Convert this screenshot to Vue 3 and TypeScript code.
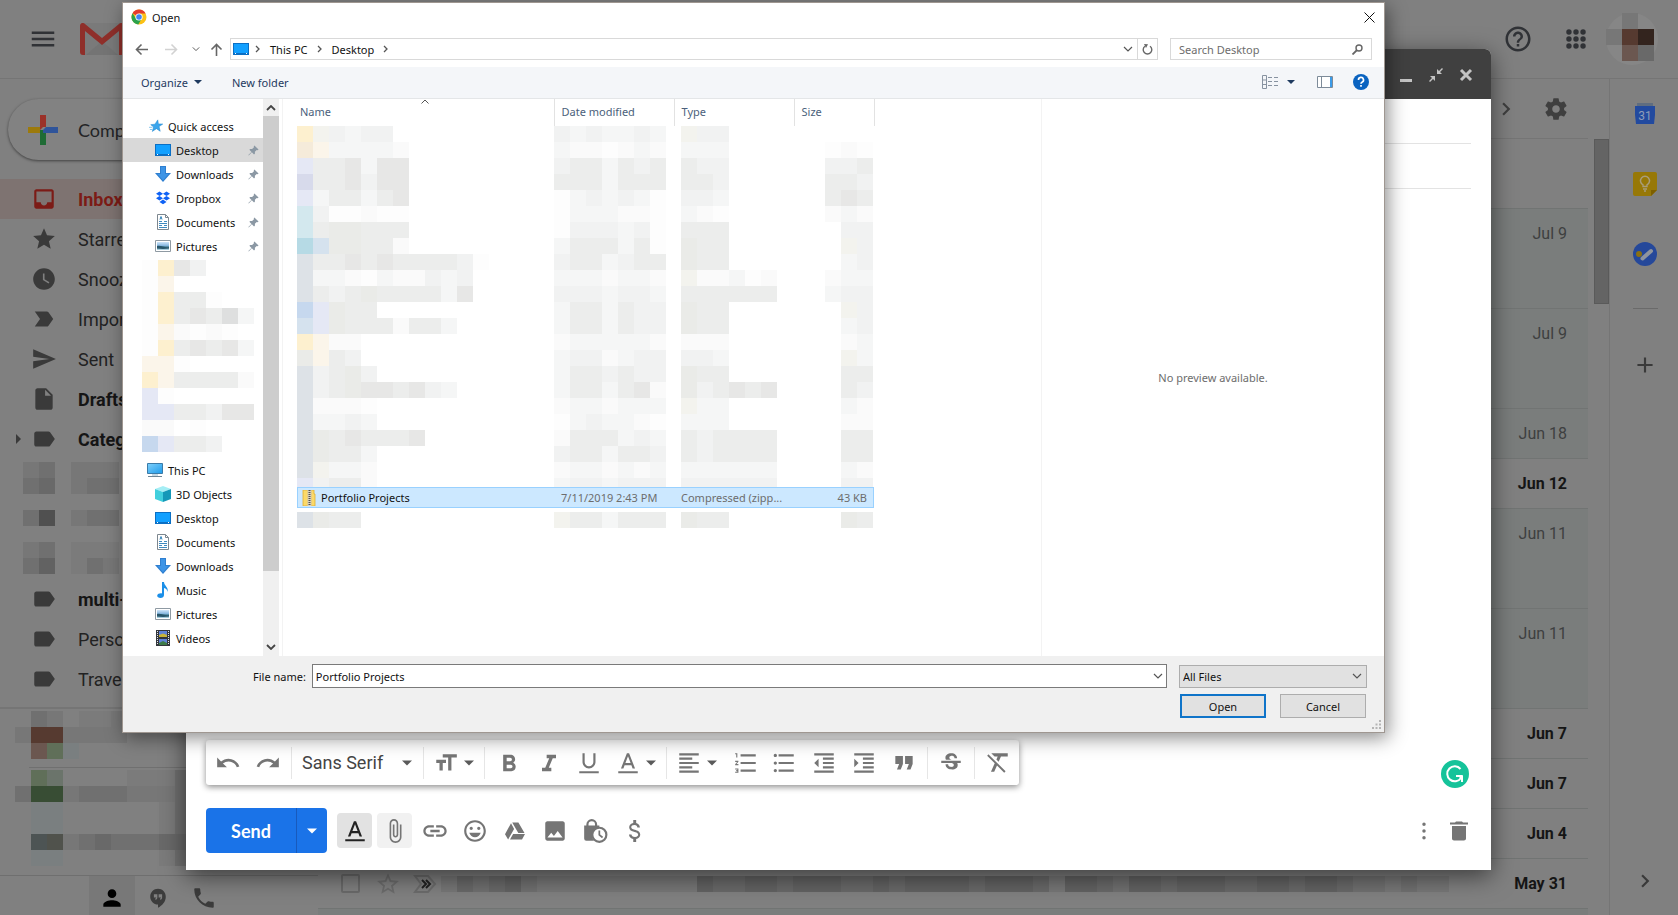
<script setup lang="ts">
import { defineComponent, h, ref, type PropType } from 'vue'

const paths: Record<string, string> = {
  menu: 'M3 18h18v-2H3v2zm0-5h18v-2H3v2zm0-7v2h18V6H3z',
  inbox: 'M19 3H5c-1.1 0-2 .9-2 2v14c0 1.1.9 2 2 2h14c1.1 0 2-.9 2-2V5c0-1.1-.9-2-2-2zm0 12h-4c0 1.66-1.34 3-3 3s-3-1.34-3-3H5V5h14v10z',
  star: 'M12 17.27L18.18 21l-1.64-7.03L22 9.24l-7.19-.61L12 2 9.19 8.63 2 9.24l5.46 4.73L5.82 21z',
  starOutline: 'M22 9.24l-7.19-.62L12 2 9.19 8.63 2 9.24l5.46 4.73L5.82 21 12 17.27 18.18 21l-1.63-7.03L22 9.24zM12 15.4l-3.76 2.27 1-4.28-3.32-2.88 4.38-.38L12 6.1l1.71 4.04 4.38.38-3.32 2.88 1 4.28L12 15.4z',
  clock: 'M12 2C6.5 2 2 6.5 2 12s4.5 10 10 10 10-4.5 10-10S17.5 2 12 2zm4.2 14.2L11 13V7h1.5v5.2l4.5 2.7-.8 1.3z',
  important: 'M3.5 18.99l11 .01c.67 0 1.27-.33 1.63-.84L20.5 12l-4.37-6.16c-.36-.51-.96-.84-1.63-.84l-11 .01L8.34 12 3.5 18.99z',
  send: 'M2.01 21L23 12 2.01 3 2 10l15 2-15 2z',
  draft: 'M6 2c-1.1 0-1.99.9-1.99 2L4 20c0 1.1.89 2 1.99 2H18c1.1 0 2-.9 2-2V8l-6-6H6zm7 7V3.5L18.5 9H13z',
  label: 'M17.63 5.84C17.27 5.33 16.67 5 16 5L5 5.01C3.9 5.01 3 5.9 3 7v10c0 1.1.9 1.99 2 1.99L16 19c.67 0 1.27-.33 1.63-.84L22 12l-4.37-6.16z',
  undo: 'M12.5 8c-2.65 0-5.05.99-6.9 2.6L2 7v9h9l-3.62-3.62c1.39-1.16 3.16-1.88 5.12-1.88 3.54 0 6.55 2.31 7.6 5.5l2.37-.78C21.08 11.03 17.15 8 12.5 8z',
  redo: 'M18.4 10.6C16.55 8.99 14.15 8 11.5 8c-4.65 0-8.58 3.03-9.96 7.22L3.9 16c1.05-3.19 4.05-5.5 7.6-5.5 1.95 0 3.73.72 5.12 1.88L13 16h9V7l-3.6 3.6z',
  size: 'M9 4v3h5v12h3V7h5V4H9zm-6 8h3v7h3v-7h3V9H3v3z',
  bold: 'M15.6 11.79c.97-.67 1.65-1.77 1.65-2.79 0-2.26-1.75-4-4-4H7v14h7.04c2.09 0 3.71-1.7 3.71-3.79 0-1.52-.86-2.82-2.15-3.42zM10 7.5h3c.83 0 1.5.67 1.5 1.5s-.67 1.5-1.5 1.5h-3v-3zm3.5 9H10v-3h3.5c.83 0 1.5.67 1.5 1.5s-.67 1.5-1.5 1.5z',
  italic: 'M10 5v3h2.21l-3.42 8H6v3h8v-3h-2.21l3.42-8H18V5z',
  underline: 'M12 17c3.31 0 6-2.69 6-6V3h-2v8c0 2.2-1.8 4-4 4s-4-1.8-4-4V3H6v8c0 3.31 2.69 6 6 6zM3 19.500v2h18v-2H3z',
  color: 'M11 3L5.500 17h2.250l1.120-3h6.250l1.120 3h2.250L13 3h-2zm-1.380 9L12 5.670 14.380 12H9.620zM3 19.500v2h18v-2z',
  align: 'M15 15H3v2h12v-2zm0-8H3v2h12V7zM3 13h18v-2H3v2zm0 8h18v-2H3v2zM3 3v2h18V3H3z',
  numbered: 'M2 18h2v.500H3v1h1v.500H2v1h3v-4H2v1zm1-11h1V3H2v1h1v3zm-1 4h1.800L2 13.100v.900h3v-1H3.200L5 10.900V10H2v1zm5-7v2h14V4H7zm0 16h14v-2H7v2zm0-7h14v-2H7v2z',
  bullets: 'M4 10.500c-.83 0-1.500.67-1.500 1.500s.67 1.500 1.500 1.500 1.500-.67 1.500-1.500-.67-1.500-1.500-1.500zm0-7c-.83 0-1.500.67-1.500 1.500S3.170 6.500 4 6.500 5.500 5.830 5.500 5 4.830 3.500 4 3.500zm0 14c-.83 0-1.500.68-1.500 1.500s.68 1.500 1.500 1.500 1.500-.68 1.500-1.500-.67-1.500-1.500-1.500zM7 20h14v-2H7v2zm0-7h14v-2H7v2zm0-9v2h14V4H7z',
  outdent: 'M11 17h10v-2H11v2zm-8-5l4 4V8l-4 4zm0 9h18v-2H3v2zM3 3v2h18V3H3zm8 6h10V7H11v2zm0 4h10v-2H11v2z',
  indent: 'M3 21h18v-2H3v2zM3 8v8l4-4-4-4zm8 9h10v-2H11v2zM3 3v2h18V3H3zm8 6h10V7H11v2zm0 4h10v-2H11v2z',
  quote: 'M4 5.500h7v7.500l-2 5H5.500l2-5H4zM13 5.500h7v7.500l-2 5h-3.500l2-5H13z',
  strike: 'M7.240 8.750c-.26-.48-.39-1.030-.39-1.670 0-.61.13-1.160.4-1.670.26-.5.63-.93 1.110-1.290.48-.35 1.050-.63 1.700-.83.66-.19 1.390-.29 2.180-.29.81 0 1.540.11 2.210.34.66.22 1.230.54 1.690.94.47.4.83.88 1.080 1.430s.38 1.150.38 1.810h-2.400c0-.31-.05-.59-.15-.85-.09-.27-.24-.49-.44-.68-.2-.19-.45-.33-.75-.44-.3-.1-.66-.16-1.060-.16-.39 0-.74.04-1.030.13s-.53.21-.72.36c-.19.16-.34.34-.44.55-.1.21-.15.43-.15.66 0 .48.25.88.74 1.210.38.25.77.48 1.410.7H7.390c-.05-.08-.11-.17-.15-.25zM21 12v-2H3v2h9.620c.18.07.4.14.55.2.37.17.66.34.87.51s.35.36.43.57c.07.2.11.43.11.69 0 .23-.05.45-.14.66-.09.2-.23.38-.42.53-.19.15-.42.26-.71.35-.29.08-.63.13-1.010.13-.43 0-.83-.04-1.180-.13s-.66-.23-.91-.42c-.25-.19-.45-.44-.59-.75s-.25-.76-.25-1.210H7c0 .55.08 1.130.24 1.580s.37.85.65 1.210c.28.35.6.66.98.92.37.26.78.48 1.220.65.44.17.9.3 1.380.39.48.08.96.13 1.440.13.8 0 1.530-.09 2.180-.28s1.210-.45 1.670-.79c.46-.34.82-.77 1.070-1.270s.38-1.070.38-1.710c0-.6-.1-1.140-.31-1.610-.05-.11-.11-.23-.17-.33H21z',
  clear: 'M3.270 4L2 5.270l6.970 6.970L5.500 20h3l2.570-5.660L17.730 21 19 19.730 3.550 4.270zM6 3v.18L8.820 6h2.900l-1.200 2.700 2.100 2.100L14.710 6H21V3H6z',
  attach: 'M16.500 6v11.500c0 2.210-1.790 4-4 4s-4-1.790-4-4V5c0-1.380 1.120-2.500 2.500-2.500s2.500 1.120 2.500 2.500v10.500c0 .55-.45 1-1 1s-1-.45-1-1V6H10v9.500c0 1.380 1.120 2.500 2.500 2.500s2.500-1.120 2.500-2.500V5c0-2.210-1.790-4-4-4S7 2.790 7 5v12.500c0 3.040 2.460 5.500 5.500 5.500s5.500-2.460 5.500-5.500V6h-1.500z',
  link: 'M3.900 12c0-1.710 1.390-3.100 3.100-3.100h4V7H7c-2.760 0-5 2.240-5 5s2.240 5 5 5h4v-1.900H7c-1.710 0-3.100-1.390-3.100-3.100zM8 13h8v-2H8v2zm9-6h-4v1.900h4c1.710 0 3.100 1.390 3.100 3.100s-1.390 3.100-3.100 3.100h-4V17h4c2.760 0 5-2.240 5-5s-2.240-5-5-5z',
  emoji: 'M12 2C6.480 2 2 6.480 2 12s4.470 10 10 10c5.520 0 10-4.480 10-10S17.520 2 12 2zM12 20c-4.420 0-8-3.580-8-8s3.580-8 8-8 8 3.580 8 8-3.580 8-8 8zm3.500-9c.83 0 1.500-.67 1.500-1.500S16.330 8 15.500 8 14 8.670 14 9.500s.67 1.500 1.500 1.500zm-7 0c.83 0 1.500-.67 1.500-1.500S9.330 8 8.500 8 7 8.670 7 9.500 7.670 11 8.500 11zm-1.800 2.500h10.600c-.8 2.540-2.780 4.200-5.300 4.200s-4.500-1.660-5.300-4.200z',
  drive: 'M8 4.200L2 15.200l3.100 5.300 6-10.500zM10.100 15L7 20.500h12l3-5.500zM21.500 14L15.400 3.500H9.200L15.300 14z',
  image: 'M21 19V5c0-1.100-.9-2-2-2H5c-1.100 0-2 .9-2 2v14c0 1.100.9 2 2 2h14c1.100 0 2-.9 2-2zM8.500 13.500l2.500 3.010L14.500 12l4.500 6H5l3.500-4.500z',
  dollar: 'M11.800 10.900c-2.270-.59-3-1.200-3-2.150 0-1.090 1.010-1.850 2.700-1.850 1.780 0 2.440.85 2.500 2.100h2.210c-.07-1.720-1.120-3.300-3.210-3.810V2.500h-2.500v2.660c-1.940.42-3.500 1.680-3.500 3.610 0 2.310 1.910 3.460 4.700 4.130 2.500.6 3 1.480 3 2.410 0 .69-.49 1.790-2.700 1.790-2.060 0-2.870-.92-2.980-2.100h-2.200c.12 2.190 1.760 3.420 3.680 3.830v2.670h2.500v-2.650c1.950-.37 3.500-1.500 3.500-3.550 0-2.840-2.430-3.810-4.700-4.400z',
  more: 'M12 6.500a1.900 1.900 0 1 0 0-3.800 1.900 1.900 0 0 0 0 3.800zm0 7.400a1.900 1.900 0 1 0 0-3.800 1.900 1.900 0 0 0 0 3.800zm0 7.400a1.900 1.900 0 1 0 0-3.800 1.900 1.900 0 0 0 0 3.800z',
  trash: 'M5 19.500c0 1.100.9 2 2 2h10c1.100 0 2-.9 2-2V7H5v12.500zM21 3.500h-5l-1-1H9l-1 1H3v2h18z',
  help: 'M11 18h2v-2h-2v2zm1-16C6.480 2 2 6.480 2 12s4.480 10 10 10 10-4.480 10-10S17.520 2 12 2zm0 18c-4.410 0-8-3.590-8-8s3.590-8 8-8 8 3.590 8 8-3.590 8-8 8zm0-14c-2.210 0-4 1.790-4 4h2c0-1.100.9-2 2-2s2 .9 2 2c0 2-3 1.750-3 5h2c0-2.250 3-2.500 3-5 0-2.210-1.790-4-4-4z',
  gear: 'M19.430 12.980c.04-.32.07-.64.07-.98s-.03-.66-.07-.98l2.110-1.650c.19-.15.24-.42.12-.64l-2-3.460c-.12-.22-.39-.3-.61-.22l-2.490 1c-.52-.4-1.080-.73-1.690-.98l-.38-2.650C14.460 2.180 14.250 2 14 2h-4c-.25 0-.46.18-.49.42l-.38 2.650c-.61.25-1.170.59-1.690.98l-2.490-1c-.23-.09-.49 0-.61.22l-2 3.460c-.13.22-.07.49.12.64l2.110 1.650c-.04.32-.07.65-.07.98s.03.66.07.98l-2.110 1.650c-.19.15-.24.42-.12.64l2 3.460c.12.22.39.3.61.22l2.490-1c.52.4 1.080.73 1.690.98l.38 2.650c.03.24.24.42.49.42h4c.25 0 .46-.18.49-.42l.38-2.650c.61-.25 1.170-.59 1.690-.98l2.490 1c.23.09.49 0 .61-.22l2-3.460c.12-.22.07-.49-.12-.64l-2.110-1.650zM12 15.500c-1.930 0-3.500-1.570-3.500-3.500s1.570-3.500 3.500-3.500 3.500 1.570 3.500 3.500-1.570 3.500-3.500 3.500z',
  person: 'M12 12c2.210 0 4-1.790 4-4s-1.790-4-4-4-4 1.790-4 4 1.790 4 4 4zm0 2c-2.670 0-8 1.340-8 4v2h16v-2c0-2.660-5.330-4-8-4z',
  hangouts: 'M12 2C7.300 2 3.500 5.800 3.500 10.500S7.300 19 12 19v3.500c4.500-2.300 8.500-6.500 8.500-12C20.500 5.800 16.700 2 12 2zm-.7 9.300c0 1.900-.8 2.700-2.300 2.700v-1.500c.7 0 1-.3 1-1H7.500V8h3.800zm5.200 0c0 1.900-.8 2.700-2.300 2.700v-1.500c.7 0 1-.3 1-1h-2.500V8h3.800z',
  phone: 'M6.620 10.790c1.440 2.830 3.760 5.140 6.590 6.590l2.200-2.200c.27-.27.67-.36 1.020-.24 1.120.37 2.330.57 3.570.57.55 0 1 .45 1 1V20c0 .55-.45 1-1 1-9.390 0-17-7.610-17-17 0-.55.45-1 1-1h3.500c.55 0 1 .45 1 1 0 1.250.2 2.450.57 3.570.11.35.03.74-.25 1.020l-2.200 2.200z',
  next: 'M10 6L8.590 7.410 13.170 12l-4.580 4.590L10 18l6-6z',
  add: 'M19 13h-6v6h-2v-6H5v-2h6V5h2v6h6v2z',
  apps: 'M3 5.500a2.500 2.500 0 1 0 5 0 2.500 2.500 0 1 0-5 0zM9.500 5.500a2.500 2.500 0 1 0 5 0 2.500 2.500 0 1 0-5 0zM16 5.500a2.500 2.500 0 1 0 5 0 2.500 2.500 0 1 0-5 0zM3 12a2.500 2.500 0 1 0 5 0 2.500 2.500 0 1 0-5 0zM9.500 12a2.500 2.500 0 1 0 5 0 2.500 2.500 0 1 0-5 0zM16 12a2.500 2.500 0 1 0 5 0 2.500 2.500 0 1 0-5 0zM3 18.500a2.500 2.500 0 1 0 5 0 2.500 2.500 0 1 0-5 0zM9.500 18.500a2.500 2.500 0 1 0 5 0 2.500 2.500 0 1 0-5 0zM16 18.500a2.500 2.500 0 1 0 5 0 2.500 2.500 0 1 0-5 0z',
  caret: 'M0 6h24L12 18z',
}

const Icon = defineComponent({
  props: { name: { type: String, required: true } },
  setup: (props) => () =>
    h('svg', { viewBox: '0 0 24 24', 'aria-hidden': 'true' }, [h('path', { d: paths[props.name], fill: 'currentColor' })]),
})

// One letter per 16px cell of a redacted area
const palette: Record<string, string> = {
  a: '#fdfdfd', b: '#fafafa', c: '#f5f6f6', d: '#f1f2f2', e: '#ecedec', f: '#e7e7e6', g: '#dedfdf',
  y: '#fdf0cf', o: '#f5ebda', n: '#fbf5ea', m: '#f3f3ee', k: '#eaebe8',
  v: '#e5e8f5', V: '#d7daeb', t: '#d3e8ee', T: '#b6dae5', s: '#dde2e7', S: '#c6d8ee', u: '#d5e2ee',
  '0': '#7b7b7b', '1': '#777777', '2': '#707070', '3': '#696969', '4': '#626262', '5': '#505050',
  r: '#563a30', R: '#6b5750', q: '#33241e', G: '#384d34', j: '#606f59', l: '#6b746b', x: '#4d5454', X: '#50524c', z: '#7a7f80',
}

const Mosaic = defineComponent({
  props: { rows: { type: Array as PropType<string[]>, required: true } },
  setup: (props) => () => {
    const cols = Math.max(...props.rows.map((r) => r.length))
    const cells = props.rows.flatMap((row, y) =>
      [...row].flatMap((c, x) =>
        c === '.' ? [] : [h('rect', { x: x * 16, y: y * 16, width: 16, height: 16, fill: palette[c] })],
      ),
    )
    return h(
      'svg',
      { width: cols * 16, height: props.rows.length * 16, 'shape-rendering': 'crispEdges', 'aria-hidden': 'true' },
      cells,
    )
  },
})

const split = (s: string) => s.split(' ')
const nameCells = split('ymdcdd onccccb veefcff Veefdff vceecef tdaabaa tekkeee Tukkeeb seefefeeeeda sccbacbbdcd sedekeeeecf Svkee uvkeeebeec ynbb kned sdekd sdekffefdc sbbba sccdc skefeeef skeec smccb vdeeb')
const dateCells = split('dcdccdc cbbabcb deecede eeeceee acdcdca acccbba adddcda ceeecea deecdee cccbccb dddcddc ceecedd ceecedd bcccccb cddbcdd ceededd ceecefb bccbccc acdccba beeecdc deeceed bccbcbc cddcddd')
const typeCells = split('mdd... ccc... edd... eed... ddc... cba... eee... kee... kee... mbbcab eeeeee kee... kee... bbb... ddc... kee... kdefef mcc... ccc... edeeee edeeee cccccc dddddd')
const sizeCells = split('... aba dde eed efe bcb .dd .md .cd bcc cdd .md .cd .bc .mc .ee .ed .cb .bb .ee .ee .cb .dd')
const treeCells = split('ayfd... an..... ayeea.. ayefegc anbaba. ayefefc nna.... yneeeeb va..... vveedff bb.a... Sveed..')
const labelCells = split('12.111 23.122 ...... 25.122 ...... 12.000 24.021')
const chatTop = split('.21.001 1rr1111 .Rjz...')
const chatBottom = split('.jl....0002 2GG12221112 .zz......02 .zz......02 .xX12322233 .zz......02')
const mailCells = ['1323421111111111' + '4334434443343444434443' + '1' + '44324434443' + '3443443221' + '211']

interface Folder { icon: string; label: string; bold?: boolean; active?: boolean; expandable?: boolean }
const folders: Folder[] = [
  { icon: 'inbox', label: 'Inbox', bold: true, active: true },
  { icon: 'star', label: 'Starred' },
  { icon: 'clock', label: 'Snoozed' },
  { icon: 'important', label: 'Important' },
  { icon: 'send', label: 'Sent' },
  { icon: 'draft', label: 'Drafts', bold: true },
  { icon: 'label', label: 'Categories', bold: true, expandable: true },
]
const labels: Folder[] = [
  { icon: 'label', label: 'multi-', bold: true },
  { icon: 'label', label: 'Personal' },
  { icon: 'label', label: 'Travel' },
]

interface Mail { date: string; tall?: boolean; unread?: boolean }
const mails: Mail[] = [
  { date: 'Jul 9', tall: true },
  { date: 'Jul 9', tall: true },
  { date: 'Jun 18' },
  { date: 'Jun 12', unread: true },
  { date: 'Jun 11', tall: true },
  { date: 'Jun 11', tall: true },
  { date: 'Jun 7', unread: true },
  { date: 'Jun 7', unread: true },
  { date: 'Jun 4', unread: true },
]

const quick = [
  { icon: 'desktop', label: 'Desktop', active: true },
  { icon: 'downloads', label: 'Downloads' },
  { icon: 'dropbox', label: 'Dropbox' },
  { icon: 'documents', label: 'Documents' },
  { icon: 'pictures', label: 'Pictures' },
]
const thisPc = [
  { icon: 'cube', label: '3D Objects' },
  { icon: 'desktop', label: 'Desktop' },
  { icon: 'documents', label: 'Documents' },
  { icon: 'downloads', label: 'Downloads' },
  { icon: 'music', label: 'Music' },
  { icon: 'pictures', label: 'Pictures' },
  { icon: 'videos', label: 'Videos' },
]

const fileName = ref('Portfolio Projects')
const search = ref('')
</script>

<template>
  <div class="page">
    <svg class="defs" width="0" height="0" aria-hidden="true">
      <defs>
        <linearGradient id="sky" x1="0" y1="0" x2="0" y2="1"><stop offset="0" stop-color="#cfe6fa" /><stop offset=".5" stop-color="#7fb2dc" /><stop offset=".6" stop-color="#3f7a8c" /><stop offset="1" stop-color="#b9dcec" /></linearGradient>
        <linearGradient id="screen" x1="0" y1="0" x2="1" y2="1"><stop offset="0" stop-color="#7fd0fb" /><stop offset="1" stop-color="#1e9bea" /></linearGradient>
      </defs>
      <symbol id="w-desktop" viewBox="0 0 16 16"><path d="M0 2h16v12H0z" fill="#0b6fc4" /><path d="M1 3h14v9H1z" fill="#12a0ff" /><path d="M2 12.500h1M13 12.500h1" stroke="#fff" /></symbol>
      <symbol id="w-downloads" viewBox="0 0 16 16"><path d="M5 0h6v7h5l-8 9-8-9h5z" fill="#2f7fd0" /><path d="M6 1h4v7h3.500L8 14.300 2.500 8H6z" fill="#3d94e6" /></symbol>
      <symbol id="w-dropbox" viewBox="0 0 16 16"><path d="M4.500 1.500L8 3.800 4.500 6 1 3.800zM11.500 1.500L15 3.800 11.500 6 8 3.800zM4.500 6L8 8.300l-3.500 2.200L1 8.300zM11.500 6L15 8.300l-3.500 2.200L8 8.300zM8 9.600l3.500 2.300L8 14.200l-3.500-2.300z" fill="#0f62f5" /></symbol>
      <symbol id="w-documents" viewBox="0 0 16 16"><path d="M2.500.5h8l3 3v12h-11z" fill="#fff" stroke="#7d878f" /><path d="M10.500.5v3h3" fill="none" stroke="#7d878f" /><path d="M4 7.500h3M4 9.500h8M4 11.500h3M9 11.500h3M4 13.500h8M9 7.500h3" stroke="#3f8bbf" /><path d="M5 5.500l1-3 1 3" fill="none" stroke="#2d7fb8" /></symbol>
      <symbol id="w-pictures" viewBox="0 0 16 16"><path d="M.5 2.500h15v11H.5z" fill="#fff" stroke="#8f9aa3" /><path d="M2 4h12v8H2z" fill="url(#sky)" /><path d="M2 8c4-1 8 2 12 1v1.500c-4 .5-8 .5-12 0z" fill="#28566b" /></symbol>
      <symbol id="w-cube" viewBox="0 0 16 16"><path d="M0 3l8-3 8 3-8 3z" fill="#a5eef5" /><path d="M0 3l8 3v10l-8-3z" fill="#41cfdd" /><path d="M16 3L8 6v10l8-3z" fill="#1598b8" /></symbol>
      <symbol id="w-music" viewBox="0 0 16 16"><path d="M7 0h2c0 4 5 5 3.500 10-.2-2.500-1.500-3.500-3.500-4v7c0 1.800-1.500 3-3.500 3S2 15 2.200 13.500C2.500 12 5 11 7 11.500z" fill="#1b8fe8" /></symbol>
      <symbol id="w-videos" viewBox="0 0 16 16"><path d="M1 0h14v16H1z" fill="#33363c" /><path d="M2.500 1v14M13.500 1v14" stroke="#e8e8e8" stroke-dasharray="1 1" /><path d="M4 1h8v6H4z" fill="#5f82d8" /><path d="M4 9h8v6H4z" fill="#5f82d8" /><path d="M4 5l4-1.500 4 1.500v2H4z" fill="#c8b43a" /><path d="M4 13l4-2 4 2v2H4z" fill="#3c7a48" /></symbol>
      <symbol id="w-pc" viewBox="0 0 16 16"><path d="M.5 1.500h15v10H.5z" fill="url(#screen)" stroke="#3b7ba8" /><path d="M5 13h6" stroke="#8fb3c8" /><path d="M1 14.500h14" stroke="#6f8594" /></symbol>
      <symbol id="w-star" viewBox="0 0 16 16"><path d="M10 1l.7 4.600 5 .2-4.200 2.900 1.300 5.300-4.300-3-4.700 3.200 1.500-5L2 6.500l4.800-.6z" fill="#3aa5ec" stroke="#1f86cf" stroke-width=".6" /><path d="M0 9.500h4M1 12h3" stroke="#79bfea" /></symbol>
      <symbol id="w-zip" viewBox="0 0 16 16"><path d="M2 0h5v16H2zM10 0h3v4h1v12h-4z" fill="#fbd968" stroke="#dfae33" stroke-width=".8" /><path d="M6.500 0h4v16h-4z" fill="#d9d3bd" /><path d="M8.500 0v16" stroke="#57514a" stroke-width="2" stroke-dasharray="1 1" /></symbol>
      <symbol id="w-pin" viewBox="0 0 12 12"><path d="M7 .5L11.500 5l-1 .6-1-.2-2 2 .1 2-1 .9-2.400-2.300L.8 11.400l-.4-.4L3.800 7.600 1.500 5.300l.9-1 2.100.1 2-2-.2-1z" fill="#8b98a4" /></symbol>
      <symbol id="w-chevron" viewBox="0 0 10 6"><path d="M1 1l4 4 4-4" fill="none" stroke="#555" stroke-width="1.200" /></symbol>
      <symbol id="w-right" viewBox="0 0 6 8"><path d="M1 1l3 3-3 3" fill="none" stroke="#555" stroke-width="1.300" /></symbol>
    </svg>

    <header class="top">
      <button class="plain menu" aria-label="Main menu"><Icon name="menu" class="i30" /></button>
      <svg class="logo" viewBox="0 0 44 32" role="img" aria-label="Gmail"><path d="M4 0h36v32H4z" fill="#7a7a7a" /><path d="M6 32l16-14 16 14z" fill="#747474" /><path d="M3 32a3 3 0 0 1-3-3V3C0 0 3-1 5 1l17 14L39 1c2-2 5-1 5 2v26a3 3 0 0 1-3 3h-2V8L22 22 5 8v24z" fill="#8f2f2a" /></svg>
      <span class="grow"></span>
      <button class="plain dark" aria-label="Support"><Icon name="help" class="i30" /></button>
      <button class="plain dark apps" aria-label="Google apps"><Icon name="apps" class="i26" /></button>
      <button class="plain avatar" aria-label="Account"><Mosaic :rows="['.1.', '1rq', '.R3']" /></button>
    </header>

    <div class="body">
      <nav class="left" aria-label="Mailboxes">
        <button class="compose-btn">
          <svg viewBox="0 0 30 30" aria-hidden="true"><path d="M12 0h6v12h-3l-3 3z" fill="#9b3129" /><path d="M0 12h12v6H0z" fill="#9c7a0c" /><path d="M12 15l3 0 3 3v12h-6z" fill="#1f6b35" /><path d="M18 12h12v6H15v-3z" fill="#2f549a" /></svg>
          <span>Compose</span>
        </button>
        <a v-for="f in folders" :key="f.label" href="#" class="folder" :class="{ bold: f.bold, active: f.active }">
          <span class="expander"><svg v-if="f.expandable" viewBox="0 0 5 10" aria-hidden="true"><path d="M0 0l5 5-5 5z" fill="#3a3a3a" /></svg></span>
          <Icon :name="f.icon" class="i26" />
          <span>{{ f.label }}</span>
        </a>
        <div class="label-block"><Mosaic :rows="labelCells" /></div>
        <a v-for="f in labels" :key="f.label" href="#" class="folder" :class="{ bold: f.bold }">
          <span class="expander"></span>
          <Icon :name="f.icon" class="i26" />
          <span>{{ f.label }}</span>
        </a>
        <section class="chat" aria-label="Chat">
          <Mosaic :rows="chatTop" />
          <hr />
          <Mosaic :rows="chatBottom" />
        </section>
        <div class="chat-tabs">
          <button class="plain on" aria-label="Contacts"><Icon name="person" class="i26" /></button>
          <button class="plain" aria-label="Hangouts"><Icon name="hangouts" class="i22" /></button>
          <button class="plain" aria-label="Phone"><Icon name="phone" class="i26" /></button>
        </div>
      </nav>

      <main class="list">
        <div class="list-tools">
          <button class="plain" aria-label="Older"><Icon name="next" class="i26" /></button>
          <button class="plain" aria-label="Settings"><Icon name="gear" class="i26" /></button>
        </div>
        <div class="spacer"></div>
        <article v-for="(m, i) in mails" :key="i" class="mail" :class="{ tall: m.tall, unread: m.unread }">
          <time>{{ m.date }}</time>
        </article>
        <article class="mail unread">
          <input type="checkbox" aria-label="Select conversation" />
          <Icon name="starOutline" class="i26 faint" />
          <svg class="marker" viewBox="0 0 24 20" aria-hidden="true"><path d="M2 2h13l7 8-7 8H2l6-8z" fill="none" stroke="#6c6c6c" stroke-width="2" /><path d="M9 6l4 4-4 4M13 6l4 4-4 4" fill="none" stroke="#222" stroke-width="2" /></svg>
          <Mosaic :rows="mailCells" />
          <time>May 31</time>
        </article>
        <article class="mail"></article>
      </main>
      <div class="scroll"><div class="scroll-thumb"></div></div>

      <aside class="side" aria-label="Add-ons">
        <svg viewBox="0 0 24 24" role="img" aria-label="Calendar"><path d="M4 1h16v5H4z" fill="#5f6d80" /><path d="M2 4h20v9l-1 9H3l-1-9z" fill="#224a9f" /><text x="12" y="18" text-anchor="middle" class="cal">31</text></svg>
        <svg viewBox="0 0 24 24" role="img" aria-label="Keep"><path d="M2 0h20a2 2 0 0 1 2 2v16l-6 6H2a2 2 0 0 1-2-2V2a2 2 0 0 1 2-2z" fill="#977807" /><path d="M24 18l-6 6v-6z" fill="#7d5f00" /><path d="M10 14.500v-1.700a4.500 4.500 0 1 1 4 0v1.700zM10 17h4M11 19h2" fill="none" stroke="#a89d7c" stroke-width="1.400" /></svg>
        <svg viewBox="0 0 24 24" role="img" aria-label="Tasks"><circle cx="12" cy="12" r="12" fill="#25489a" /><circle cx="6" cy="12" r="3" fill="#8a7013" /><path d="M9.500 16.500L18 9" stroke="#8f959e" stroke-width="4" stroke-linecap="round" /></svg>
        <hr />
        <button class="plain" aria-label="Get add-ons"><Icon name="add" class="i26" /></button>
        <span class="grow"></span>
        <button class="plain" aria-label="Hide side panel"><Icon name="next" class="i26" /></button>
      </aside>
    </div>

    <section class="compose" aria-label="New message">
      <header class="compose-head">
        <button class="plain" aria-label="Minimize"><svg viewBox="0 0 14 14"><path d="M1 11h12v3H1z" fill="#c4c4c4" /></svg></button>
        <button class="plain" aria-label="Exit full screen"><svg viewBox="0 0 14 14"><path d="M13 0l1 1-3 3 2 2H8V1l2 2zM1 14l-1-1 3-3-2-2h5v5l-2-2z" fill="#c4c4c4" /></svg></button>
        <button class="plain" aria-label="Close message"><svg viewBox="0 0 14 14"><path d="M2 2l10 10M12 2L2 12" stroke="#c4c4c4" stroke-width="3" /></svg></button>
      </header>
      <div class="field"></div>
      <div class="field"></div>
      <div class="grow"></div>

      <div class="format" role="toolbar" aria-label="Formatting options">
        <button class="tool" aria-label="Undo"><Icon name="undo" class="i26" /></button>
        <button class="tool" aria-label="Redo"><Icon name="redo" class="i26" /></button>
        <span class="sep wide"></span>
        <span class="font">
          <select aria-label="Font"><option>Sans Serif</option></select>
          <Icon name="caret" class="caret" />
        </span>
        <span class="sep"></span>
        <button class="tool drop" aria-label="Size"><Icon name="size" class="i26" /><Icon name="caret" class="caret" /></button>
        <span class="sep after"></span>
        <button class="tool" aria-label="Bold"><Icon name="bold" class="i28" /></button>
        <button class="tool" aria-label="Italic"><Icon name="italic" class="i28" /></button>
        <button class="tool" aria-label="Underline"><Icon name="underline" class="i26" /></button>
        <button class="tool drop narrow" aria-label="Text color"><Icon name="color" class="i26" /><Icon name="caret" class="caret" /></button>
        <span class="sep"></span>
        <button class="tool drop" aria-label="Align"><Icon name="align" class="i26" /><Icon name="caret" class="caret" /></button>
        <button class="tool first" aria-label="Numbered list"><Icon name="numbered" class="i26" /></button>
        <button class="tool" aria-label="Bulleted list"><Icon name="bullets" class="i26" /></button>
        <button class="tool" aria-label="Indent less"><Icon name="outdent" class="i26" /></button>
        <button class="tool" aria-label="Indent more"><Icon name="indent" class="i26" /></button>
        <button class="tool" aria-label="Quote"><Icon name="quote" class="i26" /></button>
        <span class="sep wide"></span>
        <button class="tool" aria-label="Strikethrough"><Icon name="strike" class="i26" /></button>
        <span class="sep wide"></span>
        <button class="tool" aria-label="Remove formatting"><Icon name="clear" class="i26" /></button>
      </div>

      <div class="actions">
        <div class="send">
          <button class="send-main">Send</button>
          <button class="send-more" aria-label="More send options"><Icon name="caret" class="caret" /></button>
        </div>
        <button class="act on" aria-label="Formatting"><Icon name="color" class="i26" /></button>
        <button class="act hover" aria-label="Attach files"><Icon name="attach" class="i26" /></button>
        <button class="act" aria-label="Insert link"><Icon name="link" class="i28" /></button>
        <button class="act" aria-label="Insert emoji"><Icon name="emoji" class="i26" /></button>
        <button class="act" aria-label="Insert from Drive"><Icon name="drive" class="i24" /></button>
        <button class="act" aria-label="Insert photo"><Icon name="image" class="i26" /></button>
        <button class="act" aria-label="Confidential mode"><svg class="i26" viewBox="0 0 24 24"><path d="M5 8V6a4 4 0 0 1 8 0v2" fill="none" stroke="#757575" stroke-width="2" /><path d="M2 7h14v2a7.500 7.500 0 0 0-5 12H4a2 2 0 0 1-2-2z" fill="#757575" /><circle cx="16" cy="15.500" r="6.500" fill="#fff" stroke="#757575" stroke-width="2" /><path d="M16 11.500v4l3 2.500" fill="none" stroke="#757575" stroke-width="1.600" /></svg></button>
        <button class="act" aria-label="Send money"><Icon name="dollar" class="i28" /></button>
        <span class="grow"></span>
        <button class="act slim" aria-label="More options"><Icon name="more" class="i22" /></button>
        <button class="act slim" aria-label="Discard draft"><Icon name="trash" class="i24" /></button>
      </div>

      <button class="plain grammar" aria-label="Grammar check"><svg viewBox="0 0 28 28"><circle cx="14" cy="14" r="14" fill="#15c39a" /><path d="M19.500 9A7.500 7.500 0 1 0 20 18" fill="none" stroke="#fff" stroke-width="2" /><path d="M15 16h6.500l-3 1.500M21 15.500V22" fill="none" stroke="#fff" stroke-width="2" /></svg></button>
    </section>

    <section class="dialog" role="dialog" aria-label="Open">
      <div class="title">
        <svg class="i16" viewBox="0 0 16 16" aria-hidden="true"><circle cx="8" cy="8" r="7.500" fill="#fbc116" /><path d="M8 8L1.500 4.200A7.500 7.500 0 0 1 14.600 4.500H8z" fill="#e33b2e" /><path d="M1.500 4.200A7.500 7.500 0 0 0 7.300 15.500l3.500-6L8 8 5 9.500z" fill="#2ba24c" /><circle cx="8" cy="8" r="3.600" fill="#fff" /><circle cx="8" cy="8" r="2.800" fill="#4184f3" /></svg>
        <span class="grow">Open</span>
        <button class="plain" aria-label="Close"><svg class="i11" viewBox="0 0 11 11"><path d="M.5.5l10 10M10.500.5l-10 10" stroke="#111" /></svg></button>
      </div>

      <div class="nav-row">
        <button class="plain" aria-label="Back"><svg class="i13" viewBox="0 0 13 13"><path d="M13 6.500H1.500M6.500 1.500l-5 5 5 5" fill="none" stroke="#666" stroke-width="1.600" /></svg></button>
        <button class="plain fwd" aria-label="Forward"><svg class="i13" viewBox="0 0 13 13"><path d="M0 6.500h11.500M6.500 1.500l5 5-5 5" fill="none" stroke="#d2d2d2" stroke-width="1.600" /></svg></button>
        <button class="plain recent" aria-label="Recent locations"><svg width="8" height="6"><use href="#w-chevron" /></svg></button>
        <button class="plain up" aria-label="Up"><svg class="i13" viewBox="0 0 13 13"><path d="M6.500 13V1.500M1.500 6.500l5-5 5 5" fill="none" stroke="#666" stroke-width="1.600" /></svg></button>
        <div class="address">
          <svg class="i16"><use href="#w-desktop" /></svg>
          <svg width="6" height="8"><use href="#w-right" /></svg>
          <a href="#">This PC</a>
          <svg width="6" height="8"><use href="#w-right" /></svg>
          <a href="#">Desktop</a>
          <svg width="6" height="8"><use href="#w-right" /></svg>
          <span class="grow"></span>
          <button class="plain" aria-label="Previous locations"><svg width="10" height="6"><use href="#w-chevron" /></svg></button>
          <button class="plain refresh" aria-label="Refresh"><svg class="i11" viewBox="0 0 11 11"><path d="M8 2.200A4.300 4.300 0 1 1 3 2.200" fill="none" stroke="#666" stroke-width="1.400" /><path d="M2 0l4 .3L4 4" fill="#666" /></svg></button>
        </div>
        <label class="search">
          <input v-model="search" type="text" placeholder="Search Desktop" aria-label="Search Desktop" />
          <svg class="i11" viewBox="0 0 11 11" aria-hidden="true"><circle cx="7" cy="4" r="3" fill="none" stroke="#666" stroke-width="1.400" /><path d="M5 6l-4.500 4.500" stroke="#666" stroke-width="1.800" /></svg>
        </label>
      </div>

      <div class="commands">
        <button class="plain cmd">Organize <Icon name="caret" class="tiny" /></button>
        <button class="plain cmd">New folder</button>
        <span class="grow"></span>
        <button class="plain view" aria-label="Change your view"><svg width="16" height="14" viewBox="0 0 16 14"><path d="M.5.5h4v13h-4zM.5 5h4M.5 9.500h4" fill="none" stroke="#8792a0" /><path d="M6 2.500h4M12 2.500h4M6 6.500h4M12 6.500h4M6 10.500h4M12 10.500h4" stroke="#8792a0" /></svg><Icon name="caret" class="tiny" /></button>
        <button class="plain pane" aria-label="Preview pane"><svg width="16" height="12" viewBox="0 0 16 12"><path d="M.5.5h15v11H.5zM4.500.5v11" fill="#fff" stroke="#7d8b99" /><path d="M13 1h2v10h-2z" fill="#3b9be8" /></svg></button>
        <button class="plain" aria-label="Help"><svg class="i16" viewBox="0 0 16 16"><circle cx="8" cy="8" r="8" fill="#0a63c0" /><path d="M5.500 6A2.500 2.500 0 1 1 9 8.200c-.7.4-1 .8-1 1.600M8 11v1.800" fill="none" stroke="#fff" stroke-width="1.700" /></svg></button>
      </div>

      <div class="content">
        <nav class="tree" aria-label="Folders">
          <a href="#" class="root"><svg class="i14"><use href="#w-star" /></svg>Quick access</a>
          <a v-for="q in quick" :key="q.label" href="#" :class="{ active: q.active }">
            <svg class="i16"><use :href="'#w-' + q.icon" /></svg><span class="grow">{{ q.label }}</span><svg class="pin"><use href="#w-pin" /></svg>
          </a>
          <div class="tree-block"><Mosaic :rows="treeCells" /></div>
          <a href="#" class="pc"><svg class="i16"><use href="#w-pc" /></svg>This PC</a>
          <a v-for="p in thisPc" :key="p.label" href="#"><svg class="i16"><use :href="'#w-' + p.icon" /></svg>{{ p.label }}</a>
        </nav>
        <div class="bar">
          <svg width="10" height="6" viewBox="0 0 10 6"><path d="M1 5l4-4 4 4" fill="none" stroke="#444" stroke-width="1.800" /></svg>
          <div class="bar-track"><div class="bar-thumb"></div></div>
          <svg width="10" height="6" viewBox="0 0 10 6"><path d="M1 1l4 4 4-4" fill="none" stroke="#444" stroke-width="1.800" /></svg>
        </div>
        <div class="files">
          <table>
            <colgroup><col class="c-name" /><col class="c-mid" /><col class="c-mid" /><col class="c-size" /></colgroup>
            <thead>
              <tr>
                <th>Name<svg class="sort" viewBox="0 0 8 5" aria-hidden="true"><path d="M.5 4.500L4 1l3.500 3.500" fill="none" stroke="#555" /></svg></th>
                <th>Date modified</th><th>Type</th><th>Size</th>
              </tr>
            </thead>
            <tbody>
              <tr class="hidden-rows">
                <td><div><Mosaic :rows="nameCells" /></div></td>
                <td><div><Mosaic :rows="dateCells" /></div></td>
                <td class="in"><div><Mosaic :rows="typeCells" /></div></td>
                <td class="end"><div><Mosaic :rows="sizeCells" /></div></td>
              </tr>
              <tr class="selected">
                <td><span class="file"><svg class="i16"><use href="#w-zip" /></svg>Portfolio Projects</span></td>
                <td>7/11/2019 2:43 PM</td><td>Compressed (zipp...</td><td class="num">43 KB</td>
              </tr>
              <tr class="hidden-rows last">
                <td><div><Mosaic :rows="['skee']" /></div></td>
                <td><div><Mosaic :rows="['meeceee']" /></div></td>
                <td class="in"><div><Mosaic :rows="['kee']" /></div></td>
                <td class="end"><div><Mosaic :rows="['.ke']" /></div></td>
              </tr>
            </tbody>
          </table>
        </div>
        <div class="preview">No preview available.</div>
      </div>

      <form class="foot" @submit.prevent>
        <div class="foot-row">
          <label for="file-name">File name:</label>
          <div class="combo">
            <input id="file-name" v-model="fileName" type="text" />
            <button type="button" class="plain" aria-label="Show names"><svg width="10" height="6"><use href="#w-chevron" /></svg></button>
          </div>
          <div class="kind">
            <select aria-label="File type"><option>All Files</option></select>
            <svg width="10" height="6"><use href="#w-chevron" /></svg>
          </div>
        </div>
        <div class="foot-row buttons">
          <button class="btn primary">Open</button>
          <button type="button" class="btn">Cancel</button>
        </div>
        <svg class="grip" viewBox="0 0 9 9" aria-hidden="true"><path d="M7 0h2v2H7zM7 3.500h2v2H7zM3.500 3.500h2v2h-2zM7 7h2v2H7zM3.500 7h2v2h-2zM0 7h2v2H0z" fill="#b5b5b5" /></svg>
      </form>
    </section>
  </div>
</template>

<style>
body {
  margin: 0;
}
</style>

<style scoped>
* {
  box-sizing: border-box;
}
.page {
  position: relative;
  display: flex;
  flex-direction: column;
  height: 100vh;
  overflow: hidden;
  background: #808080;
  color: #1d1d1d;
  font-family: Roboto, 'Liberation Sans', sans-serif;
  font-size: 18px;
}
.defs {
  position: absolute;
}
.page svg {
  display: block;
  flex: none;
}
button, input, select {
  font: inherit;
  color: inherit;
  margin: 0;
}
a {
  color: inherit;
  text-decoration: none;
}
.plain {
  display: flex;
  align-items: center;
  justify-content: center;
  padding: 0;
  border: 0;
  background: none;
}
.grow {
  flex: 1;
}
.i11 { width: 11px; height: 11px; }
.i13 { width: 13px; height: 13px; }
.i14 { width: 14px; height: 14px; }
.i16 { width: 16px; height: 16px; }
.i22 { width: 22px; height: 22px; }
.i24 { width: 24px; height: 24px; }
.i26 { width: 26px; height: 26px; }
.i28 { width: 28px; height: 28px; }
.i30 { width: 30px; height: 30px; }

/* Top bar */
.top {
  display: flex;
  align-items: center;
  flex: none;
  height: 79px;
  padding: 0 20px 0 28px;
  border-bottom: 1px solid #757575;
  color: #303236;
}
.logo {
  width: 44px;
  height: 32px;
  margin-left: 22px;
}
.apps {
  margin: 0 17px 0 30px;
}
.avatar {
  align-items: flex-start;
  justify-content: flex-start;
  width: 52px;
  height: 52px;
  border-radius: 50%;
  background: #868686;
}
.body {
  display: flex;
  flex: 1;
  min-height: 0;
}

/* Mailbox column */
.left {
  display: flex;
  flex-direction: column;
  flex: none;
  width: 318px;
}
.compose-btn {
  display: flex;
  align-items: center;
  gap: 20px;
  flex: none;
  align-self: flex-start;
  height: 61px;
  margin: 20px 0 19px 8px;
  padding: 0 30px 0 20px;
  border: 0;
  border-radius: 31px;
  background: #828282;
  box-shadow: 0 1px 3px rgba(0, 0, 0, 0.5);
  font-family: Lato, sans-serif;
  color: #232426;
}
.compose-btn svg {
  width: 30px;
  height: 30px;
}
.folder {
  display: flex;
  align-items: center;
  flex: none;
  height: 40px;
  color: #222;
}
.folder svg {
  color: #3a3a3a;
}
.folder .i26 {
  margin-right: 21px;
}
.expander {
  width: 31px;
  padding-left: 16px;
}
.expander svg {
  width: 5px;
  height: 10px;
}
.bold {
  font-weight: 700;
  color: #151515;
}
.active {
  background: #7e7371;
}
.folder.active, .folder.active svg {
  color: #7c1b16;
}
.label-block {
  flex: none;
  height: 120px;
  padding: 3px 0 0 23px;
}
.chat {
  flex: 1;
  min-height: 0;
  overflow: hidden;
  margin-top: 8px;
  padding: 2px 0 0 15px;
  border-top: 2px solid #757575;
}
.chat hr {
  height: 1px;
  margin: 8px 0 2px 14px;
  border: 0;
  background: #707070;
}
.chat-tabs {
  display: flex;
  flex: none;
  height: 40px;
  padding-left: 89px;
  border-top: 1px solid #6f6f6f;
  color: #3c3c3c;
}
.chat-tabs .plain {
  width: 46px;
  padding-top: 4px;
}
.chat-tabs .on {
  background: #787878;
  color: #000;
}

/* Conversation list */
.list {
  flex: 1;
  min-width: 0;
  overflow: hidden;
}
.list-tools {
  display: flex;
  align-items: center;
  justify-content: flex-end;
  gap: 24px;
  height: 60px;
  padding-right: 19px;
  border-bottom: 1px solid #757575;
  color: #3f3f3f;
}
.spacer {
  height: 69px;
}
.mail {
  display: flex;
  align-items: flex-start;
  height: 50px;
  padding: 0 21px 0 23px;
  border-top: 1px solid #717473;
  background: #7a7d7c;
  color: #3e4040;
  font-size: 16px;
  line-height: 50px;
}
.mail.tall {
  height: 100px;
}
.mail.unread {
  align-items: center;
  background: #808080;
  color: #151515;
  font-weight: 700;
}
.mail time {
  margin-left: auto;
}
.mail input {
  appearance: none;
  width: 19px;
  height: 19px;
  border: 2px solid #6a6a6a;
  border-radius: 2px;
}
.faint {
  margin: 0 12px 0 15px;
  color: #6c6c6c;
}
.marker {
  width: 24px;
  height: 20px;
  margin-right: 4px;
}
.scroll {
  flex: none;
  width: 21px;
  margin-top: 60px;
  padding-left: 6px;
}
.scroll-thumb {
  height: 165px;
  background: #646464;
  border: 1px solid #5a5a5a;
}
.side {
  display: flex;
  flex-direction: column;
  align-items: center;
  flex: none;
  width: 69px;
  padding: 23px 0 21px 2px;
  border-left: 1px solid #757575;
  color: #3a3a3a;
}
.side > svg {
  width: 24px;
  height: 24px;
  margin-bottom: 46px;
}
.side hr {
  width: 25px;
  height: 1px;
  margin: -4px 0 43px;
  border: 0;
  background: #6a6a6a;
}
.cal {
  font: 12px Roboto, sans-serif;
  fill: #8f9cb8;
}

/* Compose window */
.compose {
  position: absolute;
  top: 49px;
  right: 187px;
  bottom: 45px;
  left: 186px;
  display: flex;
  flex-direction: column;
  border-radius: 6px 6px 0 0;
  background: #fff;
  box-shadow: 0 6px 24px rgba(0, 0, 0, 0.55);
}
.compose-head {
  display: flex;
  align-items: center;
  justify-content: flex-end;
  gap: 16px;
  flex: none;
  height: 50px;
  padding: 2px 18px 0;
  border-radius: 6px 6px 0 0;
  background: #404040;
}
.compose-head svg {
  width: 14px;
  height: 14px;
}
.field {
  flex: none;
  height: 45px;
  margin: 0 20px;
  border-bottom: 1px solid #e3e3e3;
}
.format {
  display: flex;
  align-items: center;
  align-self: flex-start;
  height: 45px;
  margin: 0 20px 23px;
  padding: 0 1px 0 2px;
  border-radius: 3px;
  background: #fff;
  box-shadow: 0 2px 6px rgba(0, 0, 0, 0.45);
}
.tool {
  display: flex;
  align-items: center;
  justify-content: center;
  width: 40px;
  height: 40px;
  padding: 0;
  border: 0;
  background: none;
  color: #757575;
}
.tool.drop {
  justify-content: flex-start;
  gap: 5px;
  width: 60px;
  padding-left: 9px;
}
.tool.narrow {
  width: 57px;
  padding-left: 6px;
}
.tool.first {
  width: 37px;
}
.caret {
  width: 10px;
  height: 10px;
  color: #5a5a5a;
}
.sep {
  width: 1px;
  height: 32px;
  background: #e6e6e6;
}
.sep.wide {
  margin: 0 3px;
}
.sep.after {
  margin-right: 4px;
}
.font {
  display: flex;
  align-items: center;
  width: 128px;
  color: #444;
}
.font select {
  flex: 1;
  min-width: 0;
  padding: 0 0 0 7px;
  border: 0;
  background: none;
  appearance: none;
}
.font .caret {
  margin-right: 11px;
}
.actions {
  display: flex;
  align-items: center;
  gap: 5px;
  flex: none;
  height: 45px;
  margin: 0 20px 17px;
}
.send {
  display: flex;
  height: 45px;
  margin-right: 5px;
  border-radius: 4px;
  overflow: hidden;
  background: #1a73e8;
  color: #fff;
}
.send button {
  padding: 0;
  border: 0;
  background: none;
}
.send .send-main {
  width: 90px;
  font-family: Lato, sans-serif;
  font-weight: 700;
}
.send .send-more {
  display: flex;
  align-items: center;
  justify-content: center;
  width: 31px;
  border-left: 1px solid #185abc;
}
.send .caret {
  color: #fff;
}
.act {
  display: flex;
  align-items: center;
  justify-content: center;
  width: 35px;
  height: 35px;
  padding: 0;
  border: 0;
  border-radius: 4px;
  background: none;
  color: #757575;
}
.act.on {
  background: #e2e2e2;
  color: #222;
}
.act.hover {
  background: #f1f1f1;
}
.act.slim {
  width: 30px;
}
.act.slim:last-child {
  margin-right: -3px;
}
.grammar {
  position: absolute;
  right: 22px;
  bottom: 82px;
}
.grammar svg {
  width: 28px;
  height: 28px;
}

/* File picker */
.dialog {
  position: absolute;
  top: 2px;
  right: 293px;
  bottom: 182px;
  left: 122px;
  display: flex;
  flex-direction: column;
  border: 1px solid #9f9791;
  background: #fff;
  box-shadow: 3px 5px 18px rgba(0, 0, 0, 0.45);
  color: #111;
  font-family: 'Noto Sans', 'Open Sans', sans-serif;
  font-size: 11px;
}
.title {
  display: flex;
  align-items: center;
  gap: 5px;
  flex: none;
  height: 28px;
  padding: 0 9px 0 8px;
}
.nav-row {
  display: flex;
  align-items: center;
  flex: none;
  height: 36px;
  padding: 0 12px;
}
.nav-row > .plain {
  margin-right: 14px;
}
.nav-row > .fwd {
  margin-left: 3px;
}
.nav-row > .recent {
  margin-right: 10px;
}
.nav-row > .up {
  margin-right: 7px;
}
.address {
  display: flex;
  align-items: center;
  gap: 9px;
  flex: 1;
  height: 22px;
  padding-left: 2px;
  border: 1px solid #d9d9d9;
}
.address > svg:first-child {
  margin-right: -3px;
}
.refresh {
  align-self: stretch;
  width: 20px;
  margin-left: -5px;
  border-left: 1px solid #d9d9d9;
}
.search {
  display: flex;
  align-items: center;
  width: 202px;
  height: 22px;
  margin-left: 12px;
  padding: 0 8px;
  border: 1px solid #d9d9d9;
}
.search input {
  flex: 1;
  min-width: 0;
  padding: 0;
  border: 0;
  outline: 0;
  background: none;
}
.search input::placeholder {
  color: #6d6d6d;
  opacity: 1;
}
.commands {
  display: flex;
  align-items: center;
  flex: none;
  height: 32px;
  padding: 0 15px 1px 18px;
  border-bottom: 1px solid #e4e6e8;
  background: #f4f6f9;
  color: #1f3a5f;
}
.cmd {
  gap: 6px;
  margin-right: 30px;
}
.tiny {
  width: 8px;
  height: 8px;
}
.view {
  gap: 9px;
  margin-right: 22px;
}
.pane {
  margin-right: 20px;
}
.content {
  display: flex;
  flex: 1;
  min-height: 0;
  overflow: hidden;
}
.tree {
  flex: none;
  width: 140px;
  padding-top: 15px;
}
.tree a {
  display: flex;
  align-items: center;
  gap: 5px;
  height: 24px;
  padding: 0 4px 0 32px;
}
.tree a.root {
  padding-left: 26px;
}
.tree a.pc {
  padding-left: 24px;
}
.tree a.active {
  background: #d9d9d9;
}
.pin {
  width: 11px;
  height: 11px;
}
.tree-block {
  height: 200px;
  padding: 2px 0 0 19px;
  overflow: hidden;
}
.bar {
  display: flex;
  flex-direction: column;
  align-items: center;
  flex: none;
  width: 16px;
  padding: 6px 0;
  background: #f0f0f0;
}
.bar-track {
  flex: 1;
  width: 100%;
  padding: 5px 0;
}
.bar-thumb {
  height: 87%;
  background: #cdcdcd;
}
.files {
  flex: 1;
  min-width: 0;
  margin-left: 3px;
  padding-left: 14px;
  border-left: 1px solid #f3f3f3;
}
table {
  width: 577px;
  border-collapse: collapse;
  table-layout: fixed;
}
.c-name { width: 257px; }
.c-mid { width: 120px; }
.c-size { width: 80px; }
th {
  position: relative;
  height: 27px;
  padding: 0 0 2px 7px;
  border-right: 1px solid #e2e2e2;
  color: #4b5f7b;
  font-weight: 400;
  text-align: left;
}
th:first-child {
  padding-left: 3px;
}
.sort {
  position: absolute;
  top: 0;
  left: 124px;
  width: 8px;
  height: 5px;
}
td {
  height: 21px;
  padding: 0 0 0 7px;
  color: #6d6d6d;
  white-space: nowrap;
}
.hidden-rows td {
  padding: 0;
}
.hidden-rows .in {
  padding-left: 7px;
}
.hidden-rows div {
  height: 361px;
  overflow: hidden;
}
.hidden-rows .end {
  padding-left: 31px;
}
.hidden-rows.last div {
  height: 19px;
  padding-top: 3px;
}
.selected {
  background: #cce8ff;
  outline: 1px solid #99d1ff;
  outline-offset: -1px;
}
.selected td:first-child {
  padding-left: 4px;
}
.file {
  display: flex;
  align-items: center;
  gap: 4px;
  color: #111;
}
td.num {
  padding-right: 7px;
  text-align: right;
}
.preview {
  display: flex;
  justify-content: center;
  flex: none;
  width: 343px;
  padding-top: 271px;
  border-left: 1px solid #f3f3f3;
  color: #6d6d6d;
}
.foot {
  position: relative;
  flex: none;
  height: 76px;
  padding: 8px 17px 0 130px;
  background: #f0f0f0;
}
.foot-row {
  display: flex;
  align-items: center;
}
.foot-row label {
  margin-right: 6px;
  white-space: nowrap;
}
.combo {
  display: flex;
  flex: 1;
  height: 24px;
  margin-right: 12px;
  padding: 0 3px;
  border: 1px solid #7a7a7a;
  background: #fff;
}
.combo input {
  flex: 1;
  padding: 0;
  border: 0;
  outline: 0;
}
.kind {
  position: relative;
  display: flex;
  align-items: center;
  width: 188px;
  height: 23px;
  border: 1px solid #adadad;
  background: #e1e1e1;
}
.kind select {
  width: 100%;
  padding: 0 3px;
  border: 0;
  background: none;
  appearance: none;
}
.kind svg {
  position: absolute;
  right: 4px;
}
.buttons {
  justify-content: flex-end;
  gap: 14px;
  padding: 6px 1px 0 0;
}
.btn {
  width: 86px;
  height: 24px;
  padding: 0;
  border: 1px solid #adadad;
  background: #e1e1e1;
}
.btn.primary {
  border: 2px solid #0f74c9;
}
.grip {
  position: absolute;
  right: 3px;
  bottom: 3px;
  width: 9px;
  height: 9px;
}
</style>
